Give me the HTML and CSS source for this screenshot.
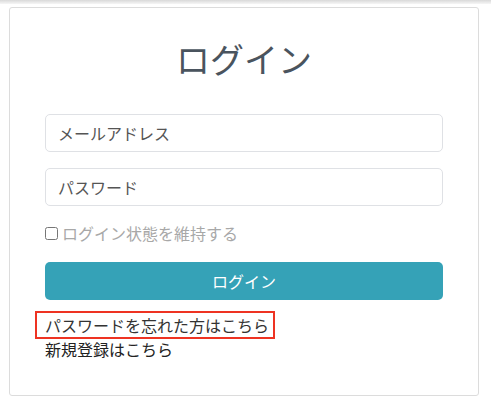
FILE: index.html
```html
<!DOCTYPE html>
<html lang="ja">
<head>
<meta charset="utf-8">
<link rel="stylesheet" href="styles.css">
</head>
<body>
<div class="topbar"></div>
<div class="card">
  <h1 class="title">ログイン</h1>
  <form class="form">
    <input class="field" type="email" placeholder="メールアドレス">
    <input class="field" type="password" placeholder="パスワード">
    <label class="remember"><input type="checkbox" class="check"> ログイン状態を維持する</label>
    <button class="btn" type="button">ログイン</button>
  </form>
  <div class="links">
    <a class="link forgot">パスワードを忘れた方はこちら</a>
    <a class="link">新規登録はこちら</a>
  </div>
</div>
</body>
</html>
```

FILE: styles.css
```css
html, body {
  margin: 0;
  padding: 0;
  background: #fff;
  font-family: "Noto Sans CJK JP", "Noto Sans", sans-serif;
}
.topbar {
  height: 4px;
  background: linear-gradient(#d9d9d9, #f6f6f6);
}
.card {
  margin: 3px 12px 0 9px;
  border: 1px solid #dcdcdc;
  border-radius: 3px;
  height: 389px;
  box-sizing: border-box;
  padding: 0 35px;
}
.title {
  margin: 26px 0 0;
  text-align: center;
  font-size: 34px;
  font-weight: 400;
  line-height: 50px;
  color: #4a545e;
}
.form {
  margin-top: 30px;
  display: flex;
  flex-direction: column;
}
.field {
  height: 38px;
  box-sizing: border-box;
  border: 1px solid #dfe1e5;
  border-radius: 5px;
  padding: 0 12px;
  font-size: 16px;
  font-family: inherit;
  margin-bottom: 16px;
}
.field::placeholder {
  color: #555;
}
.remember {
  display: flex;
  align-items: center;
  gap: 4px;
  font-size: 16px;
  color: #a8a8a8;
  height: 24px;
  margin-top: -1px;
}
.check {
  margin: 0;
  width: 13px;
  height: 13px;
}
.btn {
  margin-top: 17px;
  height: 38px;
  border: none;
  border-radius: 5px;
  background: #35a2b7;
  color: #fff;
  font-size: 16px;
  font-family: inherit;
}
.links {
  margin-top: 13px;
  display: flex;
  flex-direction: column;
  align-items: flex-start;
}
.link {
  font-size: 16px;
  line-height: 25px;
  color: #222;
}
.forgot {
  outline: 2px solid #ee3322;
  outline-offset: 0;
  padding: 0 4px 0 8px;
  margin-left: -8px;
  line-height: 24px;
  color: #333;
}
```
